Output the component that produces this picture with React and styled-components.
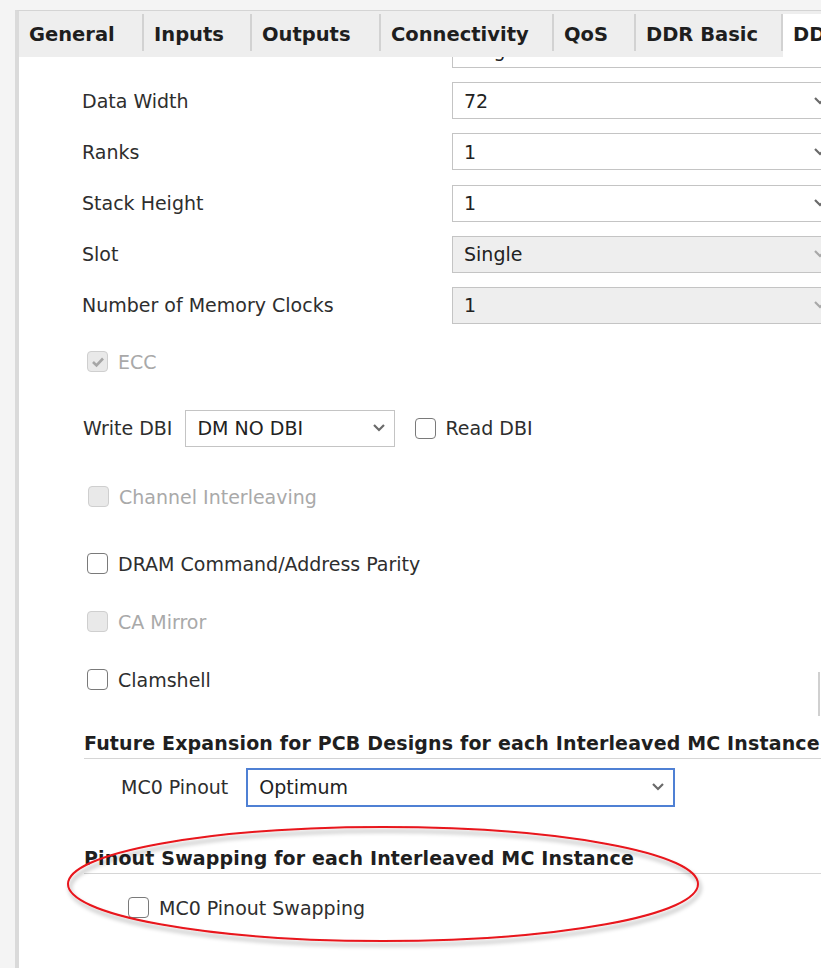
import React from 'react';
import styled, { createGlobalStyle, css } from 'styled-components';

const GlobalStyle = createGlobalStyle`
  html, body {
    margin: 0;
    padding: 0;
    background: #f4f4f4;
    overflow: hidden;
  }
  body {
    font-family: 'DejaVu Sans', 'Liberation Sans', sans-serif;
    font-size: 19px;
    color: #2e2e2e;
  }
`;

const Page = styled.div`
  position: relative;
  width: 821px;
  height: 968px;
  overflow: hidden;
  padding: 10px 0 0 15px;
  box-sizing: border-box;
`;

const Panel = styled.div`
  width: 840px;
  height: 990px;
  border-top: 1px solid #d4d4d4;
  border-left: 4px solid #dadada;
  background: #ffffff;
  display: flex;
  flex-direction: column;
`;

const TabBar = styled.div`
  display: flex;
  align-items: flex-end;
  height: 46px;
  background: #eeeeee;
  flex-shrink: 0;
`;

const Tab = styled.div`
  position: relative;
  flex: 0 0 ${p => (p.$width ? `${p.$width}px` : 'auto')};
  height: 43px;
  padding: 0 0 2px 10px;
  display: flex;
  align-items: center;
  box-sizing: border-box;
  font-weight: bold;
  font-size: 19.5px;
  color: #1e1e1e;
  white-space: nowrap;

  &::after {
    content: '';
    position: absolute;
    right: 0;
    top: 0;
    width: 2px;
    height: 37px;
    background: #d2d2d2;
  }

  ${p => p.$active && css`
    flex: 1;
    background: #ffffff;
    &::after { display: none; }
  `}
`;

const Content = styled.div`
  position: relative;
  flex: 1;
  overflow: hidden;
  padding: 0 23px 0 63px;
`;

const Scroller = styled.div`
  display: flex;
  flex-direction: column;
  margin-top: -26px;
`;

const FieldGrid = styled.div`
  display: grid;
  grid-template-columns: 370px 1fr;
  row-gap: 14.2px;
  align-items: center;
`;

const Label = styled.div`
  white-space: nowrap;
  color: #2e2e2e;
`;

const Select = styled.div`
  height: ${p => (p.$focus ? '39px' : '37px')};
  box-sizing: border-box;
  display: flex;
  align-items: center;
  justify-content: space-between;
  padding: 0 8px 0 11px;
  border: ${p => (p.$focus ? '2px solid #4f80d4' : '1px solid #c4c4c4')};
  background: ${p => (p.$disabled ? '#eeeeee' : '#ffffff')};
  width: ${p => p.$width || 'auto'};
  color: #222;
  white-space: nowrap;

  svg {
    flex-shrink: 0;
  }
`;

const Chevron = ({ color = '#6a6a6a' }) => (
  <svg width="14" height="10" viewBox="0 0 14 10">
    <polyline points="2,2 7,7 12,2" fill="none" stroke={color} strokeWidth="2.2" />
  </svg>
);

const CheckRow = styled.div`
  height: 38px;
  display: flex;
  align-items: center;
  gap: 10px;
  margin-top: ${p => p.$mt}px;
  padding-left: ${p => p.$indent || 5}px;
  color: ${p => (p.$disabled ? '#a9a9a9' : '#2e2e2e')};
  white-space: nowrap;
`;

const Box = styled.span`
  width: 21px;
  height: 21px;
  box-sizing: border-box;
  border-radius: 4px;
  border: 1.5px solid ${p => (p.$disabled ? '#cfcfcf' : '#7a7a7a')};
  background: ${p => (p.$disabled ? '#e9e9e9' : '#ffffff')};
  display: inline-flex;
  align-items: center;
  justify-content: center;
  flex-shrink: 0;
`;

const Checkbox = ({ disabled, checked }) => (
  <Box $disabled={disabled}>
    {checked && (
      <svg width="14" height="12" viewBox="0 0 14 12">
        <polyline points="2,6 5.5,9.5 12,2.5" fill="none" stroke="#a6a6a6" strokeWidth="2.6" />
      </svg>
    )}
  </Box>
);

const InlineRow = styled.div`
  display: flex;
  align-items: center;
  margin-top: ${p => p.$mt}px;
  padding-left: ${p => p.$indent || 0}px;
  white-space: nowrap;
`;

const InlineLabel = styled.span`
  margin-right: ${p => p.$gap}px;
`;

const InlineCheck = styled.label`
  display: flex;
  align-items: center;
  gap: 9px;
  margin-left: 20px;
`;

const SectionHeader = styled.div`
  height: 29px;
  margin-top: ${p => p.$mt}px;
  margin-left: 2px;
  display: flex;
  align-items: center;
  border-bottom: 1px solid #d6d6d6;
  color: #1f1f1f;
  font-weight: bold;
  letter-spacing: 0.15px;
  white-space: nowrap;
`;

const ScrollEdge = styled.div`
  position: absolute;
  left: 799px;
  top: 615px;
  width: 2px;
  height: 44px;
  background: #d0d0d0;
`;

const Annotation = styled.svg`
  position: absolute;
  left: 0;
  top: 0;
  pointer-events: none;
`;

const rows = [
  { label: '', value: 'Single' },
  { label: 'Data Width', value: '72' },
  { label: 'Ranks', value: '1' },
  { label: 'Stack Height', value: '1' },
  { label: 'Slot', value: 'Single', disabled: true },
  { label: 'Number of Memory Clocks', value: '1', disabled: true },
];

const tabs = [
  { name: 'General', width: 125 },
  { name: 'Inputs', width: 108 },
  { name: 'Outputs', width: 129 },
  { name: 'Connectivity', width: 173 },
  { name: 'QoS', width: 82 },
  { name: 'DDR Basic', width: 147 },
  { name: 'DDR Advanced', active: true },
];

export default function App() {
  return (
    <>
      <GlobalStyle />
      <Page>
        <Panel>
          <TabBar>
            {tabs.map(t => (
              <Tab key={t.name} $width={t.width} $active={t.active}>{t.name}</Tab>
            ))}
          </TabBar>
          <Content>
            <Scroller>
              <FieldGrid>
                {rows.map((r, i) => (
                  <React.Fragment key={i}>
                    <Label>{r.label}</Label>
                    <Select $disabled={r.disabled}>
                      <span>{r.value}</span>
                      <Chevron color={r.disabled ? '#a8a8a8' : '#6a6a6a'} />
                    </Select>
                  </React.Fragment>
                ))}
              </FieldGrid>

              <CheckRow $mt={19} $disabled>
                <Checkbox disabled checked />
                ECC
              </CheckRow>

              <InlineRow $mt={29} $indent={1}>
                <InlineLabel $gap={13}>Write DBI</InlineLabel>
                <Select $width="210px">
                  <span>DM NO DBI</span>
                  <Chevron />
                </Select>
                <InlineCheck>
                  <Checkbox />
                  Read DBI
                </InlineCheck>
              </InlineRow>

              <CheckRow $mt={31} $disabled $indent={6}>
                <Checkbox disabled />
                Channel Interleaving
              </CheckRow>

              <CheckRow $mt={29}>
                <Checkbox />
                DRAM Command/Address Parity
              </CheckRow>

              <CheckRow $mt={20} $disabled>
                <Checkbox disabled />
                CA Mirror
              </CheckRow>

              <CheckRow $mt={20}>
                <Checkbox />
                Clamshell
              </CheckRow>

              <SectionHeader $mt={30}>
                Future Expansion for PCB Designs for each Interleaved MC Instance
              </SectionHeader>

              <InlineRow $mt={9} $indent={39}>
                <InlineLabel $gap={18}>MC0 Pinout</InlineLabel>
                <Select $focus $width="429px">
                  <span>Optimum</span>
                  <Chevron />
                </Select>
              </InlineRow>

              <SectionHeader $mt={37}>
                Pinout Swapping for each Interleaved MC Instance
              </SectionHeader>

              <CheckRow $mt={15} $indent={46}>
                <Checkbox />
                MC0 Pinout Swapping
              </CheckRow>
            </Scroller>
            <ScrollEdge />
          </Content>
        </Panel>
        <Annotation width="821" height="968" viewBox="0 0 821 968">
          <defs>
            <filter id="shadow" x="-10%" y="-30%" width="120%" height="160%">
              <feDropShadow dx="2" dy="4" stdDeviation="2" floodColor="#000" floodOpacity="0.35" />
            </filter>
          </defs>
          <ellipse
            cx="383"
            cy="884"
            rx="315"
            ry="57"
            fill="none"
            stroke="#e8141b"
            strokeWidth="2"
            filter="url(#shadow)"
          />
        </Annotation>
      </Page>
    </>
  );
}
